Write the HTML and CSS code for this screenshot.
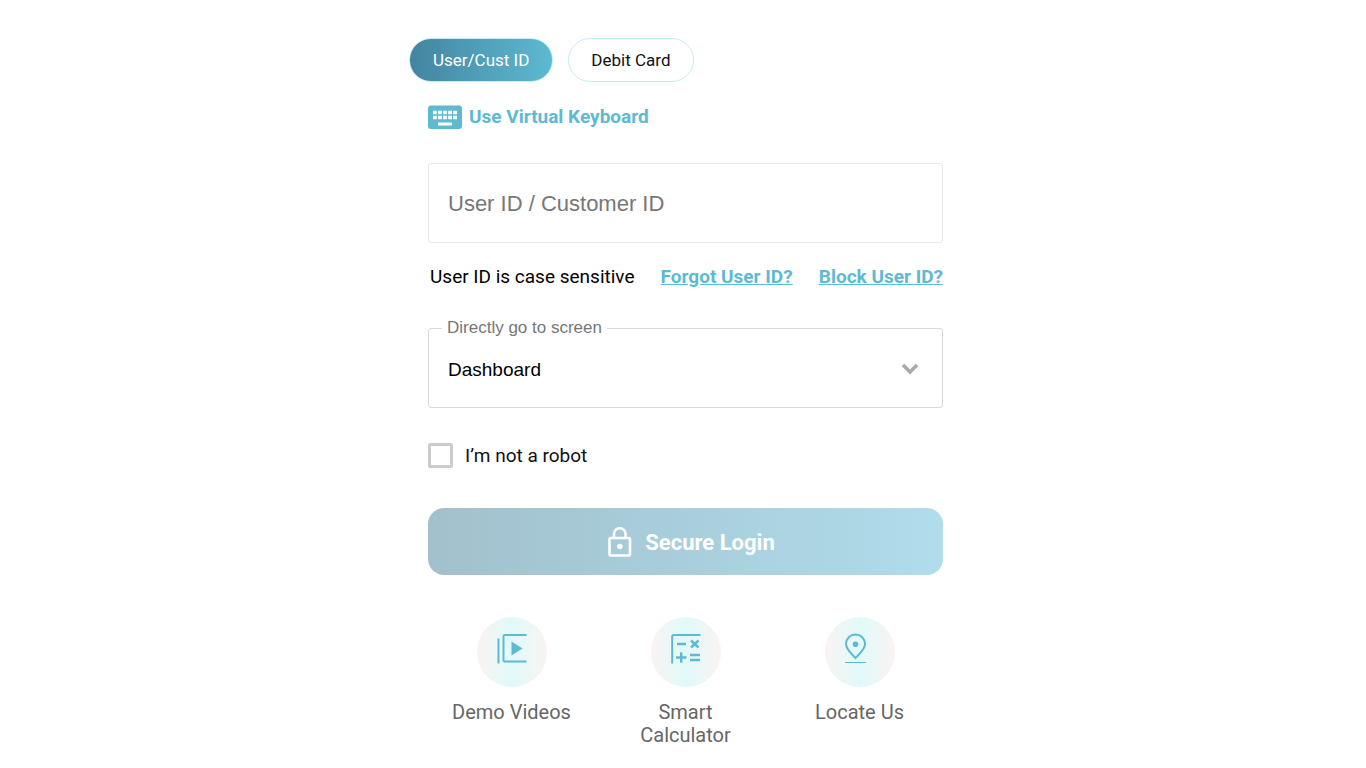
FILE: index.html
```
<!DOCTYPE html>
<html lang="en">
<head>
    <meta charset="UTF-8">
    <meta name="viewport" content="width=device-width, initial-scale=1.0">
    <title>Secure Login</title>
    <link rel="stylesheet" href="styles.css">
</head>
<body>
    <main class="login">
        <div class="tabs">
            <button type="button" class="tab active">User/Cust ID</button>
            <button type="button" class="tab">Debit Card</button>
        </div>

        <form class="login-form">
            <button type="button" class="keyboard">
                <svg width="34" height="24" viewBox="0 0 34 24" aria-hidden="true">
                    <rect y="0.500" width="34" height="23.500" rx="3" fill="#5dbad1"/>
                    <path d="M5 7.500h24M5 12.500h24" stroke="#fff" stroke-width="3.400" stroke-dasharray="3.800 1.250"/>
                    <path d="M10 19h14" stroke="#fff" stroke-width="3"/>
                </svg>
                Use Virtual Keyboard
            </button>

            <input type="text" class="user-id" id="user-id" placeholder="User ID / Customer ID" aria-label="User ID / Customer ID">

            <div class="hints">
                <span>User ID is case sensitive</span>
                <a href="#">Forgot User ID?</a>
                <a href="#">Block User ID?</a>
            </div>

            <div class="screen-field">
                <label for="screen">Directly go to screen</label>
                <select id="screen">
                    <option>Dashboard</option>
                </select>
                <svg class="chevron" width="18" height="12" viewBox="0 0 18 12" aria-hidden="true">
                    <path d="M2 2l7 7 7-7" fill="none" stroke="#a9a9a9" stroke-width="3.500"/>
                </svg>
            </div>

            <div class="robot">
                <input type="checkbox" id="robot">
                <label for="robot">I’m not a robot</label>
            </div>

            <button type="submit" class="submit">
                <svg width="24" height="30" viewBox="0 0 24 30" fill="none" stroke="#fff" stroke-width="2.600" aria-hidden="true">
                    <rect x="1.500" y="11" width="20.500" height="17.500" rx="1"/>
                    <path d="M6 11V7a5.800 5.800 0 0 1 11.600 0v4"/>
                    <circle cx="11.800" cy="19.500" r="2.800" fill="#fff" stroke="none"/>
                </svg>
                Secure Login
            </button>

            <nav class="links">
                <a href="#">
                    <span class="circle">
                        <svg width="70" height="70" viewBox="0 0 70 70" fill="none" stroke="#5dbad1" stroke-width="2" aria-hidden="true">
                            <path d="M21.500 21.500v25"/>
                            <path d="M49.500 18H28a1.500 1.500 0 0 0-1.500 1.500v23A1.500 1.500 0 0 0 28 44.500h21.500"/>
                            <path d="M34.500 24.500v14L45.500 31.500z" fill="#5dbad1" stroke="none"/>
                        </svg>
                    </span>
                    <span class="caption">Demo Videos</span>
                </a>
                <a href="#">
                    <span class="circle">
                        <svg width="70" height="70" viewBox="0 0 70 70" fill="none" stroke="#5dbad1" stroke-width="2.400" aria-hidden="true">
                            <path d="M21.200 46.500v-27A1.500 1.500 0 0 1 22.700 18H49.500" stroke-width="2"/>
                            <path d="M26 27h9M40 23.500l7.500 7M47.500 23.500l-7.500 7M25 40.500h10.500M30.200 35.200v10.600M39 38h10M39 43h10"/>
                        </svg>
                    </span>
                    <span class="caption">Smart Calculator</span>
                </a>
                <a href="#">
                    <span class="circle">
                        <svg width="70" height="70" viewBox="0 0 70 70" fill="none" stroke="#5dbad1" stroke-width="2" aria-hidden="true">
                            <path d="M30.500 41c-3-3.200-9.500-8.500-9.500-14a9.500 9.500 0 0 1 19 0c0 5.500-6.500 10.800-9.500 14z"/>
                            <circle cx="30.500" cy="27.200" r="2.800" fill="#5dbad1" stroke="none"/>
                            <path d="M20 45.500h21" stroke-width="1"/>
                        </svg>
                    </span>
                    <span class="caption">Locate Us</span>
                </a>
            </nav>
        </form>
    </main>
</body>
</html>
```
FILE: styles.css
```
* {
    box-sizing: border-box;
}
body {
    margin: 0;
    background: #fff;
    color: #111;
    font-family: Roboto, sans-serif;
    font-size: 19px;
    line-height: 24px;
}
button,
input,
select {
    font-family: inherit;
    margin: 0;
}
button {
    cursor: pointer;
}
.login {
    max-width: 548px;
    margin: 0 auto;
    padding-top: 38px;
}
.tabs {
    display: flex;
    gap: 15px;
}
.tab {
    height: 44px;
    padding: 0 22px;
    border: 1px solid #c4edf4;
    border-radius: 22px;
    background: #fff;
    color: #111;
    font-size: 17px;
}
.tab.active {
    padding: 0 23px;
    background: linear-gradient(to right, #4484a0, #5dbad1);
    color: #fff;
}
.login-form {
    padding: 23px 14px 24px 19px;
}
.keyboard {
    display: flex;
    align-items: center;
    gap: 7px;
    padding: 0;
    border: 0;
    background: none;
    color: #5dbad1;
    font-size: 19px;
    font-weight: 700;
    line-height: 24px;
}
.user-id {
    display: block;
    width: 100%;
    height: 80px;
    margin-top: 34px;
    padding: 2px 19px 0;
    border: 1px solid #e8e8e8;
    border-radius: 3px;
    font-family: "Liberation Sans", Arial, sans-serif;
    font-size: 22px;
}
.user-id::placeholder {
    color: #777;
}
.hints {
    display: flex;
    justify-content: space-between;
    margin-top: 22px;
    padding-left: 2px;
    color: #000;
    white-space: nowrap;
}
.hints a {
    color: #5dbad1;
    font-weight: 700;
}
.screen-field {
    position: relative;
    margin-top: 39px;
    font-family: "Liberation Sans", Arial, sans-serif;
}
.screen-field label {
    position: absolute;
    top: -12px;
    left: 14px;
    padding: 0 5px;
    background: #fff;
    color: #777;
    font-size: 17px;
}
.screen-field select {
    display: block;
    width: 100%;
    height: 80px;
    padding: 3px 19px 0;
    border: 1px solid #d8d8d8;
    border-radius: 3px;
    background: #fff;
    color: #000;
    font-size: 19px;
    appearance: none;
}
.chevron {
    position: absolute;
    top: 35px;
    right: 24px;
    pointer-events: none;
}
.robot {
    display: flex;
    align-items: center;
    gap: 12px;
    margin-top: 35px;
}
.robot input {
    width: 25px;
    height: 25px;
    border: 3px solid #ccc;
    border-radius: 2px;
    appearance: none;
}
.robot input:checked {
    background: #5dbad1;
}
.submit {
    display: flex;
    align-items: center;
    justify-content: center;
    gap: 13px;
    width: 100%;
    height: 67px;
    margin-top: 40px;
    padding: 1px 0 0 12px;
    border: 0;
    border-radius: 16px;
    background: linear-gradient(to right, #a2c0cc, #b0dceb);
    color: #fff;
    font-size: 22px;
    font-weight: 700;
}
.links {
    display: grid;
    grid-template-columns: repeat(3, 1fr);
    gap: 7px;
    margin-top: 42px;
}
.links a {
    display: flex;
    flex-direction: column;
    align-items: center;
    gap: 14px;
    color: #666;
    font-size: 20px;
    line-height: 23px;
    text-align: center;
    text-decoration: none;
}
.circle {
    width: 70px;
    height: 70px;
    border-radius: 50%;
    background: linear-gradient(to right, #fbf3f3, #e0faf9, #fbf3f3);
}
.caption {
    max-width: 130px;
}
```
